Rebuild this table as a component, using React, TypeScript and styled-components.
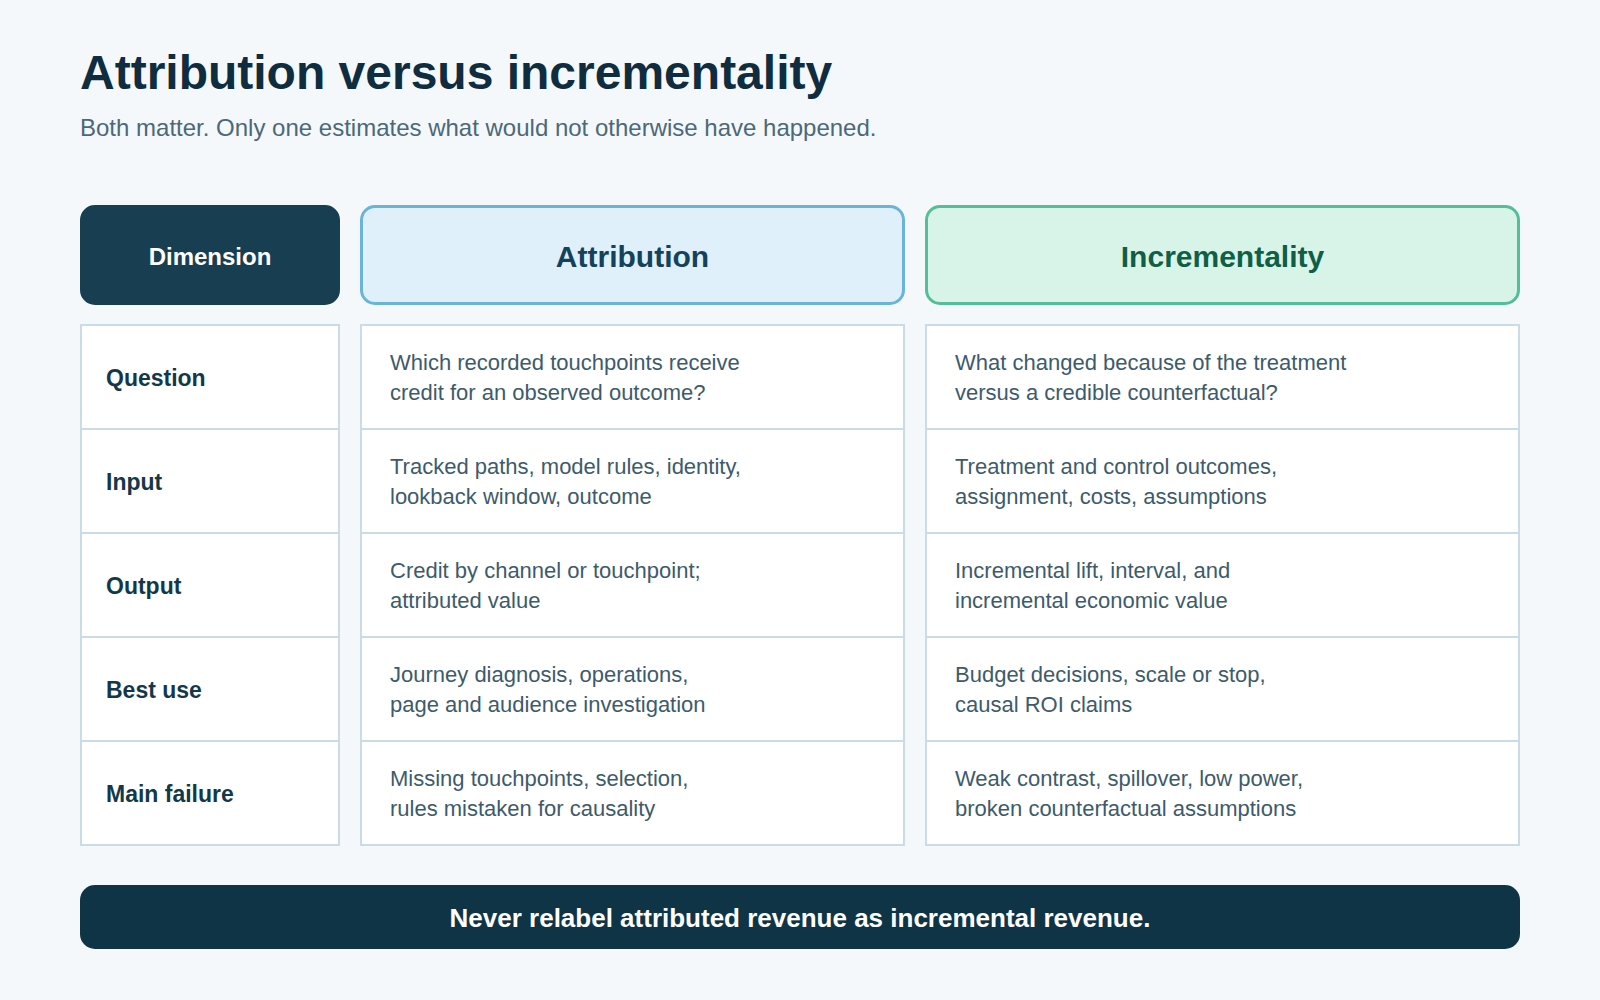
import React from "react";
import styled, { createGlobalStyle } from "styled-components";

const GlobalStyle = createGlobalStyle`
  html, body {
    margin: 0;
    padding: 0;
    background: #f4f8fb;
  }
  body {
    font-family: "Liberation Sans", Arial, Helvetica, sans-serif;
  }
  * { box-sizing: border-box; }
`;

const Page = styled.main`
  width: 1600px;
  height: 1000px;
  padding: 44px 80px 0 80px;
  background: #f4f8fb;
  display: flex;
  flex-direction: column;
`;

const Title = styled.h1`
  margin: 0;
  font-size: 48px;
  line-height: 1.2;
  font-weight: 700;
  color: #0f2d3f;
`;

const Subtitle = styled.p`
  margin: 10px 0 0 0;
  font-size: 24px;
  line-height: 1.3;
  color: #4d6878;
`;

const Grid = styled.section`
  margin-top: 62px;
  display: grid;
  grid-template-columns: 260px 545px 595px;
  column-gap: 20px;
`;

type Variant = "dim" | "attr" | "incr";

const headerColors: Record<Variant, { bg: string; border: string; fg: string; size: number }> = {
  dim: { bg: "#173e51", border: "#173e51", fg: "#ffffff", size: 24 },
  attr: { bg: "#dff0fb", border: "#6ab4da", fg: "#14425b", size: 30 },
  incr: { bg: "#d8f4e8", border: "#53bf98", fg: "#0f5f47", size: 30 },
};

const Header = styled.div<{ $v: Variant }>`
  height: 100px;
  padding-top: 5px;
  border-radius: 15px;
  background: ${(p) => headerColors[p.$v].bg};
  border: 3px solid ${(p) => headerColors[p.$v].border};
  color: ${(p) => headerColors[p.$v].fg};
  font-size: ${(p) => headerColors[p.$v].size}px;
  font-weight: 700;
  display: flex;
  align-items: center;
  justify-content: center;
`;

const Column = styled.div`
  margin-top: 19px;
  background: #ffffff;
  border: 2px solid #cadce7;
  display: flex;
  flex-direction: column;
`;

const Cell = styled.div<{ $label?: boolean }>`
  height: 102px;
  display: flex;
  flex-direction: column;
  justify-content: center;
  padding: ${(p) => (p.$label ? "4px 24px 0" : "2px 28px 0")};
  & + & {
    height: 104px;
    border-top: 2px solid #cadce7;
  }
`;

const Label = styled.span`
  font-size: 23px;
  font-weight: 700;
  color: #14384a;
`;

const Body = styled.span`
  font-size: 22px;
  line-height: 30px;
  color: #3d5b6b;
`;

const Footer = styled.footer`
  margin-top: 39px;
  height: 64px;
  padding-top: 4px;
  border-radius: 15px;
  background: #0f3446;
  color: #ffffff;
  font-size: 26px;
  font-weight: 700;
  display: flex;
  align-items: center;
  justify-content: center;
`;

type Row = { label: string; attr: string[]; incr: string[] };

const rows: Row[] = [
  {
    label: "Question",
    attr: ["Which recorded touchpoints receive", "credit for an observed outcome?"],
    incr: ["What changed because of the treatment", "versus a credible counterfactual?"],
  },
  {
    label: "Input",
    attr: ["Tracked paths, model rules, identity,", "lookback window, outcome"],
    incr: ["Treatment and control outcomes,", "assignment, costs, assumptions"],
  },
  {
    label: "Output",
    attr: ["Credit by channel or touchpoint;", "attributed value"],
    incr: ["Incremental lift, interval, and", "incremental economic value"],
  },
  {
    label: "Best use",
    attr: ["Journey diagnosis, operations,", "page and audience investigation"],
    incr: ["Budget decisions, scale or stop,", "causal ROI claims"],
  },
  {
    label: "Main failure",
    attr: ["Missing touchpoints, selection,", "rules mistaken for causality"],
    incr: ["Weak contrast, spillover, low power,", "broken counterfactual assumptions"],
  },
];

const Lines: React.FC<{ lines: string[] }> = ({ lines }) => (
  <Body>
    {lines.map((l, i) => (
      <React.Fragment key={i}>
        {i > 0 && <br />}
        {l}
      </React.Fragment>
    ))}
  </Body>
);

export default function App() {
  return (
    <>
      <GlobalStyle />
      <Page>
        <Title>Attribution versus incrementality</Title>
        <Subtitle>Both matter. Only one estimates what would not otherwise have happened.</Subtitle>
        <Grid>
          <Header $v="dim">Dimension</Header>
          <Header $v="attr">Attribution</Header>
          <Header $v="incr">Incrementality</Header>
          <Column>
            {rows.map((r) => (
              <Cell $label key={r.label}>
                <Label>{r.label}</Label>
              </Cell>
            ))}
          </Column>
          <Column>
            {rows.map((r) => (
              <Cell key={r.label}>
                <Lines lines={r.attr} />
              </Cell>
            ))}
          </Column>
          <Column>
            {rows.map((r) => (
              <Cell key={r.label}>
                <Lines lines={r.incr} />
              </Cell>
            ))}
          </Column>
        </Grid>
        <Footer>Never relabel attributed revenue as incremental revenue.</Footer>
      </Page>
    </>
  );
}
